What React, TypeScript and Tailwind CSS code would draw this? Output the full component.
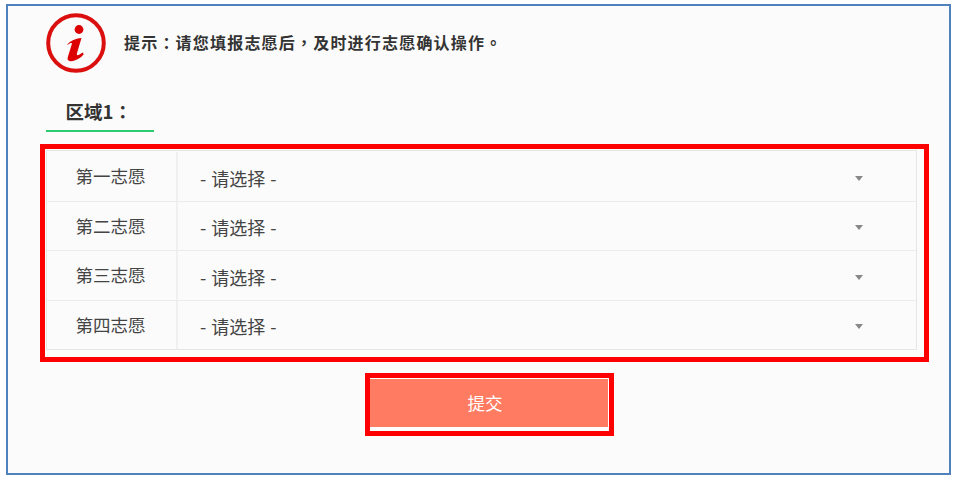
const rows = ["第一志愿", "第二志愿", "第三志愿", "第四志愿"];

const font = "font-['Noto_Sans_CJK_TC','Noto_Sans',sans-serif]";

function InfoIcon() {
  return (
    <svg width="62" height="62" viewBox="0 0 62 62" aria-hidden="true">
      <circle cx="30" cy="31" r="27.8" fill="none" stroke="#dc0f0f" strokeWidth="4" />
      <ellipse cx="33" cy="17.5" rx="4.4" ry="4.4" fill="#dc0000" />
      <path
        d="M21 33c3-3.8 8-6.6 14.5-7l-4.6 15.6c-.5 1.8.8 2 2.2 1.2l3.6-2.4 1.1 1.8c-3.2 3.8-7.8 6.6-12.8 7-2.8.2-4-1.3-3.3-3.6l4.1-13.4c.4-1.4-.6-1.6-1.7-1l-2 1.2z"
        fill="#dc0000"
      />
    </svg>
  );
}

function Row({ label, last }: { label: string; last: boolean }) {
  return (
    <div className={`flex ${last ? "h-[48.5px]" : "h-[49.5px] border-b border-[#ebebeb]"}`}>
      <div className="flex w-[131px] items-center justify-center border-r-2 border-[#f0f0f0] pr-[2px] text-[17.5px] text-[#444]">
        {label}
      </div>
      <div className="flex flex-1 items-center justify-between pl-[22px] pr-[53px] pt-[4px] text-[18px] text-[#444]">
        <span className="[word-spacing:1px]">- 请选择 -</span>
        <span className="h-0 w-0 border-x-[4px] border-t-[5px] border-x-transparent border-t-[#888]" />
      </div>
    </div>
  );
}

export default function App() {
  return (
    <div className={`h-[480px] w-[954px] bg-white pl-[6px] pt-[4px] ${font}`}>
      <div className="h-[471px] w-[945px] border-2 border-[#4f81bd] bg-[#fbfbfb] pl-[38px]">
        <div className="flex items-center pt-[6px]">
          <InfoIcon />
          <p className="mb-[2px] ml-[16px] text-[16px] font-bold tracking-[1.2px] text-[#333]">
            提示：请您填报志愿后，及时进行志愿确认操作。
          </p>
        </div>
        <div className="mt-[24px] w-[108px] border-b-2 border-[#2ecc71] pb-[5px] pl-[19.5px] text-[18.5px] leading-[27px] font-bold text-[#333]">
          区域1：
        </div>
        <div className="-ml-[6px] mt-[12px] w-[889px] border-[5px] border-[#ff0000] p-[1px]">
          <div className="w-[871px] border border-[#e6e6e6] pt-[1px]">
            {rows.map((label, i) => (
              <Row key={label} label={label} last={i === rows.length - 1} />
            ))}
          </div>
          <div className="h-[6px]" />
        </div>
        <div className="ml-[319px] mt-[11px] w-[249px] border-[5px] border-[#ff0000] bg-white pb-[4px]">
          <button
            type="button"
            className="mt-[1px] flex h-[48px] w-[238px] items-center justify-center bg-[#ff7b62] pr-[8px] pt-[1px] text-[17.5px] text-white"
          >
            提交
          </button>
        </div>
      </div>
    </div>
  );
}
